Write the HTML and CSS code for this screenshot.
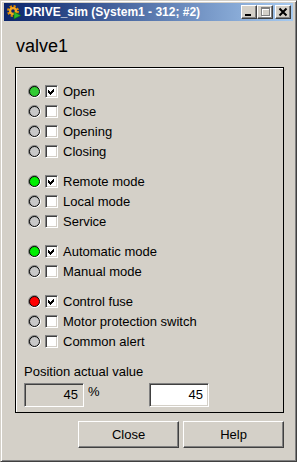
FILE: index.html
```html
<!DOCTYPE html>
<html>
<head>
<meta charset="utf-8">
<link rel="stylesheet" href="styles.css">
</head>
<body>
<div class="window">
  <div class="titlebar">
    <svg class="app-icon" width="16" height="16" viewBox="0 0 16 16">
      <circle cx="7" cy="7" r="4.5" fill="none" stroke="#e08a00" stroke-width="3" stroke-dasharray="2 1.53"/>
      <circle cx="7" cy="7" r="4" fill="#f5a623"/>
      <circle cx="7" cy="7" r="1.8" fill="#0a246a"/>
      <path d="M8 8 L15 11.5 L8 15 Z" fill="#2db82d" stroke="#0b6b0b" stroke-width="0.6"/>
    </svg>
    <span class="title">DRIVE_sim (System1 - 312; #2)</span>
    <div class="caption-buttons">
      <div class="cbtn"><svg width="14" height="12" viewBox="0 0 14 12" shape-rendering="crispEdges"><rect x="3" y="8" width="6" height="2" fill="#000"/></svg></div>
      <div class="cbtn"><svg width="14" height="12" viewBox="0 0 14 12" shape-rendering="crispEdges">
        <path d="M3 1h9v9h-9z M4 3v6h7v-6z" fill="#fff" fill-rule="evenodd" transform="translate(1 1)"/>
        <path d="M3 1h9v9h-9z M4 3v6h7v-6z" fill="#808080" fill-rule="evenodd"/></svg></div>
      <div class="cbtn close"><svg width="14" height="12" viewBox="0 0 14 12"><path d="M3.5 2.5 L10.5 9.5 M10.5 2.5 L3.5 9.5" stroke="#000" stroke-width="2"/></svg></div>
    </div>
  </div>
  <div class="content">
    <div class="heading">valve1</div>
    <div class="group">
      <div class="set">
        <div class="row"><span class="led led-green"></span><span class="check"><svg width="11" height="11" viewBox="0 0 11 11" shape-rendering="crispEdges"><polygon points="2,4 4,6 8,2 8,5 4,9 2,7" fill="#000"/></svg></span><span class="label">Open</span></div>
        <div class="row"><span class="led"></span><span class="check"></span><span class="label">Close</span></div>
        <div class="row"><span class="led"></span><span class="check"></span><span class="label">Opening</span></div>
        <div class="row"><span class="led"></span><span class="check"></span><span class="label">Closing</span></div>
      </div>
      <div class="set">
        <div class="row"><span class="led led-lime"></span><span class="check"><svg width="11" height="11" viewBox="0 0 11 11" shape-rendering="crispEdges"><polygon points="2,4 4,6 8,2 8,5 4,9 2,7" fill="#000"/></svg></span><span class="label">Remote mode</span></div>
        <div class="row"><span class="led"></span><span class="check"></span><span class="label">Local mode</span></div>
        <div class="row"><span class="led"></span><span class="check"></span><span class="label">Service</span></div>
      </div>
      <div class="set">
        <div class="row"><span class="led led-lime"></span><span class="check"><svg width="11" height="11" viewBox="0 0 11 11" shape-rendering="crispEdges"><polygon points="2,4 4,6 8,2 8,5 4,9 2,7" fill="#000"/></svg></span><span class="label">Automatic mode</span></div>
        <div class="row"><span class="led"></span><span class="check"></span><span class="label">Manual mode</span></div>
      </div>
      <div class="set">
        <div class="row"><span class="led led-red"></span><span class="check"><svg width="11" height="11" viewBox="0 0 11 11" shape-rendering="crispEdges"><polygon points="2,4 4,6 8,2 8,5 4,9 2,7" fill="#000"/></svg></span><span class="label">Control fuse</span></div>
        <div class="row"><span class="led"></span><span class="check"></span><span class="label">Motor protection switch</span></div>
        <div class="row"><span class="led"></span><span class="check"></span><span class="label">Common alert</span></div>
      </div>
      <div class="position">
        <div class="pos-label">Position actual value</div>
        <div class="pos-fields">
          <div class="field readonly">45</div>
          <span class="unit">%</span>
          <div class="field">45</div>
        </div>
      </div>
    </div>
    <div class="buttons">
      <div class="btn">Close</div>
      <div class="btn">Help</div>
    </div>
  </div>
</div>
</body>
</html>
```
FILE: styles.css
```css
html, body {
  margin: 0;
  padding: 0;
  background: #d4d0c8;
}

.window {
  width: 297px;
  height: 462px;
  box-sizing: border-box;
  border: 1px solid;
  border-color: #d4d0c8 #404040 #404040 #d4d0c8;
  box-shadow: inset 1px 1px #fff, inset -1px -1px #808080;
  padding: 2px 3px 3px 3px;
  background: #d4d0c8;
  display: flex;
  flex-direction: column;
  font-family: "Liberation Sans", Arial, sans-serif;
  font-size: 13px;
  color: #000;
}

.titlebar {
  height: 18px;
  flex: none;
  background: linear-gradient(90deg, #0a246a 0%, #a6caf0 100%);
  display: flex;
  align-items: center;
  padding: 0 2px 0 2px;
}

.app-icon {
  flex: none;
  margin-right: 2px;
}

.title {
  flex: 1;
  color: #fff;
  font-family: "Liberation Sans", Arial, sans-serif;
  font-weight: bold;
  font-size: 12px;
  white-space: nowrap;
  letter-spacing: 0;
}

.caption-buttons {
  display: flex;
  align-items: center;
}

.cbtn {
  width: 16px;
  height: 14px;
  box-sizing: border-box;
  background: #d4d0c8;
  border: 1px solid;
  border-color: #fff #404040 #404040 #fff;
  box-shadow: inset -1px -1px #808080;
  display: flex;
}

.cbtn svg {
  display: block;
}

.cbtn.close {
  margin-left: 2px;
}

.content {
  flex: 1;
  padding: 15px 9px 0 11px;
  display: flex;
  flex-direction: column;
}

.heading {
  font-size: 18px;
  line-height: 20px;
  padding-left: 1px;
  margin-bottom: 11px;
}

.group {
  border: 1px solid #000;
  box-shadow: inset 1px 1px #fff;
  padding: 13px 0 5px 12px;
  display: flex;
  flex-direction: column;
  gap: 10px;
}

.set {
  display: flex;
  flex-direction: column;
}

.row {
  height: 20px;
  display: flex;
  align-items: center;
}

.led {
  width: 13px;
  height: 13px;
  box-sizing: border-box;
  border-radius: 50%;
  padding: 1px;
  background: linear-gradient(135deg, #808080 0%, #808080 35%, #fff 65%, #fff 100%);
  margin-right: 4px;
  flex: none;
}

.led::after {
  content: "";
  display: block;
  width: 100%;
  height: 100%;
  box-sizing: border-box;
  border-radius: 50%;
  border: 1px solid #000;
  background: #c8c8c8;
}

.led-green::after { background: #33cc33; }
.led-lime::after { background: #00f000; }
.led-red::after { background: #ff0000; }

.check {
  width: 13px;
  height: 13px;
  box-sizing: border-box;
  background: #fff;
  border: 1px solid;
  border-color: #808080 #fff #fff #808080;
  box-shadow: inset 1px 1px #404040, inset -1px -1px #d4d0c8;
  margin-right: 5px;
  flex: none;
}

.check svg {
  display: block;
}

.label {
  white-space: nowrap;
}

.position {
  margin-top: 3px;
  margin-left: -4px;
}

.pos-label {
  line-height: 16px;
  margin-bottom: 3px;
}

.pos-fields {
  display: flex;
}

.field {
  width: 60px;
  height: 24px;
  box-sizing: border-box;
  border: 1px solid;
  border-color: #808080 #fff #fff #808080;
  box-shadow: inset 1px 1px #404040, inset -1px -1px #d4d0c8;
  background: #fff;
  text-align: right;
  padding-right: 5px;
  line-height: 22px;
}

.field.readonly {
  background: #d4d0c8;
}

.unit {
  width: 65px;
  box-sizing: border-box;
  padding-left: 4px;
  line-height: 18px;
}

.buttons {
  display: flex;
  justify-content: flex-end;
  gap: 4px;
  margin-top: 8px;
}

.btn {
  width: 101px;
  height: 27px;
  box-sizing: border-box;
  border: 1px solid;
  border-color: #fff #404040 #404040 #fff;
  box-shadow: inset -1px -1px #808080;
  display: flex;
  align-items: center;
  justify-content: center;
}
```
